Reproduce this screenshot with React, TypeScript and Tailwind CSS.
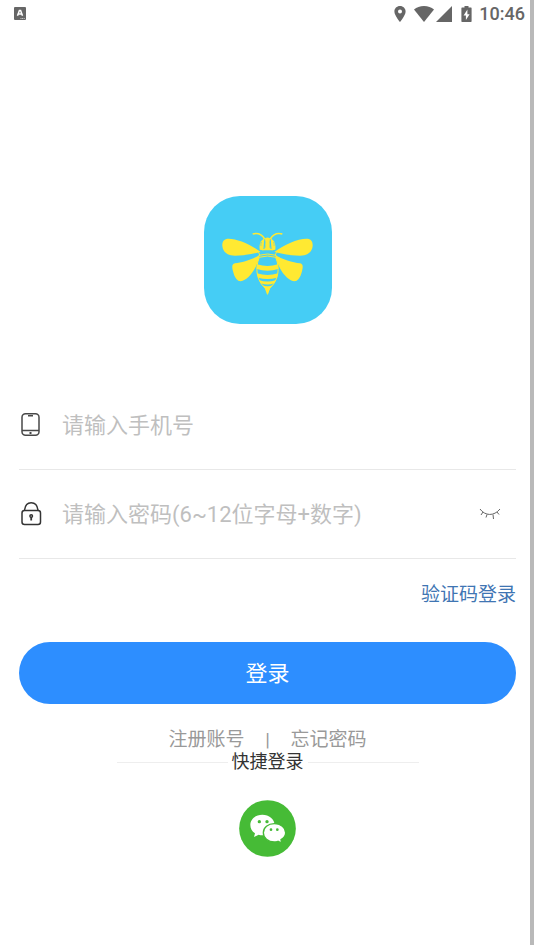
import { useState } from "react";

function StatusBar() {
  return (
    <header className="flex h-[27px] items-center justify-between pl-[14px] pr-[5px] text-[#666666]">
      <svg width="12" height="13" viewBox="0 0 12 13" aria-hidden="true">
        <rect width="12" height="13" rx="1" fill="#666" />
        <path d="M3.500 8.800 5.400 3.400h1.200L8.500 8.800M4.200 7h3.600" fill="none" stroke="#fff" strokeWidth="1.500" />
        <path d="M6.500 11.500h4.500" stroke="#ccc" strokeWidth="1" strokeDasharray="1 .6" />
      </svg>
      <div className="flex items-center">
        <svg className="mr-[8px]" width="12" height="16" viewBox="0 0 12 16" fill="currentColor" aria-hidden="true">
          <path fillRule="evenodd" d="M6 0C2.800 0 .4 2.400.4 5.500.4 9.600 6 16 6 16s5.600-6.400 5.600-10.500C11.600 2.400 9.200 0 6 0Zm0 3.500a2 2 0 1 1 0 4 2 2 0 0 1 0-4Z" />
        </svg>
        <svg className="mr-[2px]" width="20" height="16" viewBox="0 0 20 16" fill="currentColor" aria-hidden="true">
          <path d="M10 16 0 3.500C2.600 1.300 6 0 10 0s7.400 1.300 10 3.500Z" />
        </svg>
        <svg className="mr-[9px]" width="16" height="16" viewBox="0 0 16 16" fill="currentColor" aria-hidden="true">
          <path d="M16 0v16H0Z" />
        </svg>
        <svg className="mr-[7px]" width="11" height="16" viewBox="0 0 11 16" fill="currentColor" aria-hidden="true">
          <path fillRule="evenodd" d="M3.500 0h4v1.600H10q.6 0 .6.700v13q0 .7-.6.700H1q-.6 0-.6-.7v-13q0-.7.6-.7h2.500ZM6.400 3.600 2.600 9.600h2.300V14l3.700-5.800H6.400Z" />
        </svg>
        <time className="text-[18px] leading-[27px] font-medium">10:46</time>
      </div>
    </header>
  );
}

function BeeWings() {
  return (
    <>
      <path d="M194 192C166 170 124 152 98 152 84 152 78 160 79 174 81 192 94 203 117 203 146 203 172 197 194 192Z" />
      <path d="M191 201C172 213 138 224 117 226 108 228 107 236 111 250 116 270 124 280 134 280 156 277 183 244 191 201Z" />
      <path d="M187 193q5 5 4 11" fill="none" stroke="#ffe932" strokeWidth="3" />
      <path d="M170 138C184 134 197 138 206 153" fill="none" stroke="#ffe932" strokeWidth="5" />
      <path d="M205 152C194 156 189 168 191 185L202 187 204 164Z" />
      <path d="M197 162q-4 6-2 12" fill="none" stroke="#45cdf5" strokeWidth="1.500" />
    </>
  );
}

function BeeLogo() {
  return (
    <svg className="size-32 rounded-[36px] bg-[#45cdf5]" viewBox="24 24 384 384" fill="#ffe932" role="img" aria-label="蜜蜂">
      <BeeWings />
      <g transform="translate(429 0) scale(-1 1)">
        <BeeWings />
      </g>
      <path d="M207 151q7.500-5 15 0l-1 12 3 22h-19l3-22Z" />
      <path d="M206 160l1 19M223 160l-1 19" stroke="#45cdf5" strokeWidth="2.500" />
      <path d="M197 185h35" stroke="#ffe932" strokeWidth="4" />
      <path d="M188 202Q214.500 194 241 202M189 208Q214.500 200 240 208" fill="none" stroke="#ffe932" strokeWidth="3" />
      <path d="M190 208C177 239 180 276 208 301L214.500 319 221 301C249 276 252 239 239 208" fill="none" stroke="#ffe932" strokeWidth="3" />
      <path d="M183 229Q214.500 239 246 229L247 243Q214.500 253 182 243Z" />
      <path d="M183 256Q214.500 266 246 256L243 269Q214.500 277 186 269Z" />
      <path d="M189 276Q214.500 285 240 276L235 286Q214.500 293 194 286Z" />
      <path d="M199 292Q214.500 298 230 292L221 303 214.500 318 208 303Z" />
    </svg>
  );
}

function PhoneIcon() {
  return (
    <svg width="24" height="24" viewBox="0 0 24 24" fill="none" stroke="#484848" strokeWidth="1.500" aria-hidden="true">
      <rect x="3" y="0.800" width="17" height="21.500" rx="3.500" />
      <path d="M3 17.500h17M9 2.800h5" />
      <path d="M11.500 19v2" strokeWidth="2" />
    </svg>
  );
}

function LockIcon() {
  return (
    <svg width="24" height="24" viewBox="0 0 24 24" fill="none" stroke="#343434" strokeWidth="1.500" aria-hidden="true">
      <rect x="3" y="8.500" width="18.500" height="14" rx="2.500" />
      <path d="M5.500 8.500C6 3.500 8.500 0.800 12.200 0.800S18.500 3.500 19 8.500" />
      <circle cx="12.200" cy="14" r="1.300" />
      <path d="M12.200 15v3.500" strokeWidth="1.800" />
    </svg>
  );
}

function ClosedEyeIcon() {
  return (
    <svg width="22" height="14" viewBox="0 0 22 14" fill="none" stroke="#666" strokeWidth="1" aria-hidden="true">
      <path d="M1 2C6 9 15 9.500 21 2M4 5 2 8M8 7.500 7 10.500M14 7.500l.5 4.500M18 5l2 2.500" />
    </svg>
  );
}

function WechatIcon() {
  return (
    <svg className="size-[57px]" viewBox="33 30 171 171" aria-hidden="true">
      <circle cx="118.500" cy="115.500" r="85" fill="#46bb36" />
      <path fill="#fff" d="M103 74c-20 0-36 13-36 31 0 10 5 19 14 25l-3 11 14-7q5 2 12 2c20 0 36-13 36-31s-17-31-37-31Z" />
      <path fill="#fff" stroke="#46bb36" strokeWidth="4" d="M139 101c-19 0-33 12-33 27s14 28 33 28q6 0 11-2l11 5-2-10c8-5 14-12 14-21 0-15-15-27-34-27Z" />
      <g fill="#46bb36">
        <circle cx="94" cy="95" r="5" />
        <circle cx="117" cy="95" r="5" />
        <circle cx="129" cy="119" r="4" />
        <circle cx="148" cy="119" r="4" />
      </g>
    </svg>
  );
}

const fieldRow = "flex h-[89px] items-center border-b border-[#e8e8e8]";
const fieldInput =
  "ml-[19px] h-12 min-w-0 flex-1 bg-transparent text-[22px] text-[#333333] outline-none placeholder:text-[#bfbfbf]";

export default function App() {
  const [visible, setVisible] = useState(false);

  return (
    <div className="flex min-h-screen bg-white font-['Roboto','Noto_Sans_CJK_SC',sans-serif]">
      <div className="min-w-0 flex-1">
        <StatusBar />
        <main className="flex flex-col pr-[14px] pb-10 pl-[19px]">
          <div className="mt-[169px] flex justify-center">
            <BeeLogo />
          </div>

          <form className="mt-[57px] flex flex-col" onSubmit={(e) => e.preventDefault()}>
            <div className={fieldRow}>
              <label htmlFor="phone" aria-label="手机号">
                <PhoneIcon />
              </label>
              <input id="phone" type="tel" placeholder="请输入手机号" className={fieldInput} />
            </div>
            <div className={fieldRow}>
              <label htmlFor="password" aria-label="密码">
                <LockIcon />
              </label>
              <input
                id="password"
                type={visible ? "text" : "password"}
                placeholder="请输入密码(6~12位字母+数字)"
                className={fieldInput}
              />
              <button type="button" aria-label="显示密码" className="mr-[15px]" onClick={() => setVisible(!visible)}>
                <ClosedEyeIcon />
              </button>
            </div>
            <a href="#code" className="mt-[22px] self-end text-[19px] leading-7 text-[#3f75b3]">
              验证码登录
            </a>
            <button type="submit" className="mt-[33px] h-[62px] rounded-full bg-[#2d8eff] text-[22px] text-white">
              登录
            </button>
          </form>

          <nav className="mt-6 flex items-center justify-center text-[19px] leading-6 text-[#999999]">
            <a href="#register">注册账号</a>
            <span className="w-[46px] text-center">|</span>
            <a href="#forgot">忘记密码</a>
          </nav>

          <section className="flex flex-col items-center">
            <h2 className="flex items-center text-[18px] leading-5 text-[#333333]">
              <span className="mr-1 h-px w-[111px] bg-[#eeeeee]" />
              快捷登录
              <span className="ml-1 h-px w-[111px] bg-[#eeeeee]" />
            </h2>
            <button type="button" aria-label="微信登录" className="mt-7">
              <WechatIcon />
            </button>
          </section>
        </main>
      </div>
      <div className="mb-[5px] w-1 bg-[#b9b9b9]" />
    </div>
  );
}
